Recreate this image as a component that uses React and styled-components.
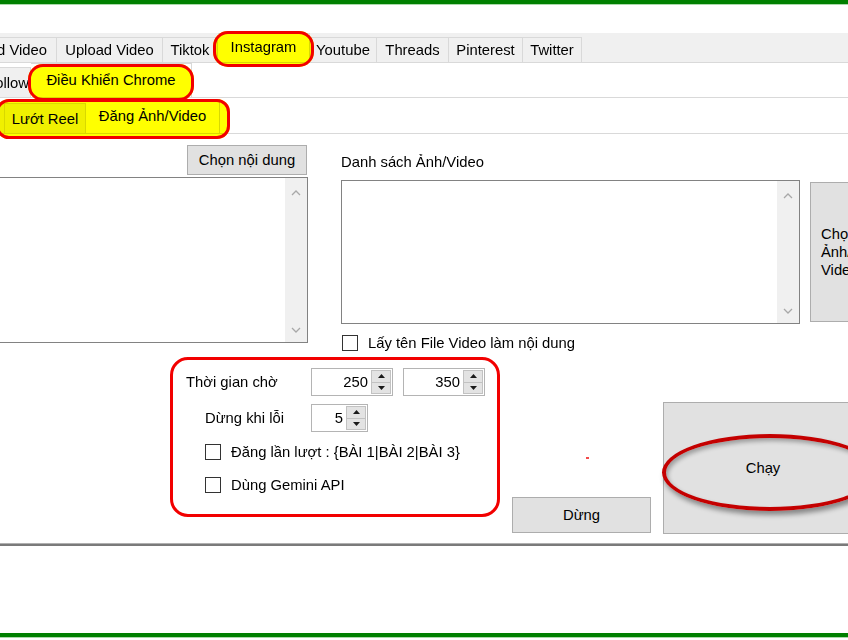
import React from 'react';
import styled, { createGlobalStyle } from 'styled-components';

const GlobalStyle = createGlobalStyle`
  html, body {
    margin: 0;
    padding: 0;
    background: #fff;
  }
  body {
    font-family: "Liberation Sans", Arial, "DejaVu Sans", sans-serif;
    font-size: 14.8px;
    color: #000;
  }
  * {
    box-sizing: border-box;
  }
`;

const Window = styled.div`
  width: 848px;
  height: 640px;
  overflow: hidden;
  display: flex;
  flex-direction: column;
  background: #fff;
`;

const GreenRule = styled.div`
  flex-shrink: 0;
  height: 5px;
  background: #008000;
  border-bottom: 1px solid #a9d9a9;
  margin-bottom: ${p => (p.$bottom ? 2 : 28)}px;
`;

/* tab headers */
const TabStrip = styled.div`
  flex-shrink: 0;
  display: flex;
  align-items: flex-end;
  height: ${p => p.$h}px;
  background: ${p => (p.$gray ? '#f0f0f0' : '#fff')};
  border-bottom: 1px solid #d9d9d9;
`;

const Tab = styled.div`
  flex-shrink: 0;
  display: flex;
  align-items: center;
  justify-content: ${p => (p.$clip != null ? 'flex-end' : 'center')};
  width: ${p => p.$w}px;
  height: ${p => p.$h}px;
  padding-right: ${p => p.$clip || 0}px;
  overflow: ${p => (p.$clip != null ? 'hidden' : 'visible')};
  white-space: nowrap;
  background: ${p => (p.$active ? '#fff' : '#f0f0f0')};
  border-top: 1px solid #d9d9d9;
  border-right: 1px solid #d9d9d9;
  padding-bottom: ${p => (p.$active ? 2 : 0)}px;
`;

/* yellow marker + red ring drawn over the tabs in the screenshot */
const Marked = styled.div`
  position: relative;
  display: flex;
  align-items: flex-end;
  flex-shrink: 0;

  &::before,
  &::after {
    content: '';
    position: absolute;
    top: ${p => p.$in[0]}px;
    right: ${p => p.$in[1]}px;
    bottom: ${p => p.$in[2]}px;
    left: ${p => p.$in[3]}px;
    border-radius: ${p => p.$r}px;
    pointer-events: none;
  }
  &::before {
    background: #ffff00;
    mix-blend-mode: multiply;
  }
  &::after {
    border: 3px solid #f20000;
  }
`;

/* form body */
const TopSection = styled.div`
  flex-shrink: 0;
  display: flex;
  gap: 33px;
  padding-top: 11px;
`;

const LeftColumn = styled.div`
  flex-shrink: 0;
  width: 308px;
  display: flex;
  flex-direction: column;
  align-items: flex-end;
  gap: 2px;
`;

const RightColumn = styled.div`
  flex: 1;
  display: flex;
  flex-direction: column;
`;

const Caption = styled.div`
  margin-top: 9px;
  line-height: 17px;
  white-space: nowrap;
`;

const ListRow = styled.div`
  display: flex;
  gap: 10px;
  margin-top: 9px;
`;

const TextBox = styled.div`
  flex-shrink: 0;
  display: flex;
  justify-content: flex-end;
  width: ${p => p.$w}px;
  height: ${p => p.$h}px;
  background: #fff;
  border: 1px solid #828282;
  border-left: ${p => (p.$cut ? 'none' : '1px solid #828282')};
`;

const ScrollTrack = styled.div`
  width: 22px;
  background: #f0f0f0;
  display: flex;
  flex-direction: column;
  justify-content: space-between;
  align-items: center;
  padding: 12px 0 9px;
`;

const WinButton = styled.button`
  flex-shrink: 0;
  width: ${p => p.$w}px;
  height: ${p => p.$h}px;
  margin-top: ${p => p.$mt || 0}px;
  margin-right: ${p => p.$mr || 0}px;
  padding: 0;
  background: #e1e1e1;
  border: 1px solid #adadad;
  font: inherit;
  color: #000;
  line-height: 18px;
  text-align: ${p => (p.$left ? 'left' : 'center')};
  padding-left: ${p => (p.$left ? 10 : 0)}px;
  position: relative;
`;

const CheckRow = styled.div`
  display: flex;
  align-items: center;
  gap: 10px;
  height: 16px;
  margin-top: ${p => p.$mt || 0}px;
  padding-left: ${p => p.$indent || 0}px;
  white-space: nowrap;
`;

const CheckBox = styled.span`
  flex-shrink: 0;
  width: 16px;
  height: 16px;
  background: #fff;
  border: 1px solid #333;
`;

const BottomSection = styled.div`
  flex-shrink: 0;
  display: flex;
  gap: 12px;
  height: 177px;
  margin-top: 6px;
  padding-left: 170px;
`;

const SettingsBox = styled.div`
  flex-shrink: 0;
  width: 330px;
  height: 160px;
  border: 3px solid #f20000;
  border-radius: 18px;
  padding-top: 8px;
  display: flex;
  flex-direction: column;
`;

const FieldRow = styled.div`
  display: flex;
  align-items: center;
  margin-top: ${p => p.$mt || 0}px;
  padding-left: ${p => p.$indent}px;
`;

const FieldLabel = styled.div`
  flex-shrink: 0;
  width: ${p => p.$w}px;
  white-space: nowrap;
`;

const Spin = styled.div`
  flex-shrink: 0;
  display: flex;
  width: ${p => p.$w}px;
  height: 28px;
  margin-right: ${p => p.$mr || 0}px;
  padding: 1px;
  background: #fff;
  border: 1px solid #b4b4b4;
`;

const SpinValue = styled.div`
  flex: 1;
  display: flex;
  align-items: center;
  justify-content: flex-end;
  padding-right: 3px;
`;

const SpinButtons = styled.div`
  width: 20px;
  display: flex;
  flex-direction: column;
`;

const SpinButton = styled.div`
  flex: 1;
  display: flex;
  align-items: center;
  justify-content: center;
  background: #e3e3e3;
  border: 1px solid #c2c2c2;
  & + & {
    border-top: none;
  }
`;

const StopColumn = styled.div`
  flex-shrink: 0;
  width: 139px;
  display: flex;
  flex-direction: column;
  justify-content: flex-end;
  padding-bottom: 1px;
`;

const Speck = styled.span`
  width: 3px;
  height: 2px;
  margin: 0 0 38px 74px;
  background: #f24a4a;
`;

const RunButton = styled(WinButton)`
  &::after {
    content: '';
    position: absolute;
    left: -2px;
    top: 31px;
    width: 208px;
    height: 69px;
    border: 4px solid #c40000;
    border-radius: 50%;
    box-shadow: 2px 4px 5px rgba(0, 0, 0, 0.4), inset 2px 3px 4px rgba(0, 0, 0, 0.3);
    pointer-events: none;
  }
`;

const Separator = styled.div`
  flex-shrink: 0;
  height: 3px;
  margin-top: 9px;
  background: #7a7a7a;
  border-top: 1px solid #b0b0b0;
`;

const Filler = styled.div`
  flex: 1;
`;

const Chevron = ({ down }) => (
  <svg width="10" height="6" viewBox="0 0 10 6">
    <polyline
      points={down ? '1,1 5,5 9,1' : '1,5 5,1 9,5'}
      fill="none"
      stroke="#a8a8a8"
      strokeWidth="1.3"
    />
  </svg>
);

const Arrow = ({ down }) => (
  <svg width="7" height="4" viewBox="0 0 7 4">
    <polygon points={down ? '0,0 7,0 3.5,4' : '0,4 7,4 3.5,0'} fill="#1a1a1a" />
  </svg>
);

const Spinner = ({ value, w, mr }) => (
  <Spin $w={w} $mr={mr}>
    <SpinValue>{value}</SpinValue>
    <SpinButtons>
      <SpinButton><Arrow /></SpinButton>
      <SpinButton><Arrow down /></SpinButton>
    </SpinButtons>
  </Spin>
);

const ScrollBar = () => (
  <ScrollTrack>
    <Chevron />
    <Chevron down />
  </ScrollTrack>
);

const mainTabs = [
  { label: 'Upload Video', w: 106 },
  { label: 'Tiktok', w: 55 },
];
const moreTabs = [
  { label: 'Youtube', w: 67 },
  { label: 'Threads', w: 72 },
  { label: 'Pinterest', w: 74 },
  { label: 'Twitter', w: 59 },
];

export default function App() {
  return (
    <Window>
      <GlobalStyle />
      <GreenRule />

      <TabStrip $h={30} $gray>
        <Tab $w={57} $h={25} $clip={9}>Download Video</Tab>
        {mainTabs.map(t => (
          <Tab key={t.label} $w={t.w} $h={25}>{t.label}</Tab>
        ))}
        <Marked $in={[-2, -4, -5, -5]} $r={15}>
          <Tab $w={92} $h={29} $active>Instagram</Tab>
        </Marked>
        {moreTabs.map(t => (
          <Tab key={t.label} $w={t.w} $h={25}>{t.label}</Tab>
        ))}
      </TabStrip>

      <TabStrip $h={35}>
        <Tab $w={31} $h={30} $clip={1}>Follow</Tab>
        <Marked $in={[1, -2, -4, -3]} $r={15}>
          <Tab $w={161} $h={34} $active>Điều Khiển Chrome</Tab>
        </Marked>
      </TabStrip>

      <TabStrip $h={36}>
        <Marked $in={[0, -10, -6, -4]} $r={13}>
          <Tab $w={5} $h={30} />
          <Tab $w={81} $h={30}>Lướt Reel</Tab>
          <Tab $w={134} $h={34} $active>Đăng Ảnh/Video</Tab>
        </Marked>
      </TabStrip>

      <TopSection>
        <LeftColumn>
          <WinButton $w={120} $h={30} $mr={1}>Chọn nội dung</WinButton>
          <TextBox $w={308} $h={166} $cut>
            <ScrollBar />
          </TextBox>
        </LeftColumn>

        <RightColumn>
          <Caption>Danh sách Ảnh/Video</Caption>
          <ListRow>
            <TextBox $w={459} $h={144}>
              <ScrollBar />
            </TextBox>
            <WinButton $w={60} $h={140} $mt={2} $left>
              Chọn<br />Ảnh/<br />Video
            </WinButton>
          </ListRow>
          <CheckRow $mt={11} $indent={1}>
            <CheckBox />
            Lấy tên File Video làm nội dung
          </CheckRow>
        </RightColumn>
      </TopSection>

      <BottomSection>
        <SettingsBox>
          <FieldRow $indent={13}>
            <FieldLabel $w={125}>Thời gian chờ</FieldLabel>
            <Spinner value="250" w={82} mr={10} />
            <Spinner value="350" w={82} />
          </FieldRow>
          <FieldRow $indent={32} $mt={8}>
            <FieldLabel $w={106}>Dừng khi lỗi</FieldLabel>
            <Spinner value="5" w={57} />
          </FieldRow>
          <CheckRow $mt={12} $indent={32}>
            <CheckBox />
            Đăng lần lượt : {'{BÀI 1|BÀI 2|BÀI 3}'}
          </CheckRow>
          <CheckRow $mt={17} $indent={32}>
            <CheckBox />
            Dùng Gemini API
          </CheckRow>
        </SettingsBox>

        <StopColumn>
          <Speck />
          <WinButton $w={139} $h={36}>Dừng</WinButton>
        </StopColumn>

        <RunButton $w={200} $h={132} $mt={45}>Chạy</RunButton>
      </BottomSection>

      <Separator />
      <Filler />
      <GreenRule $bottom />
    </Window>
  );
}
